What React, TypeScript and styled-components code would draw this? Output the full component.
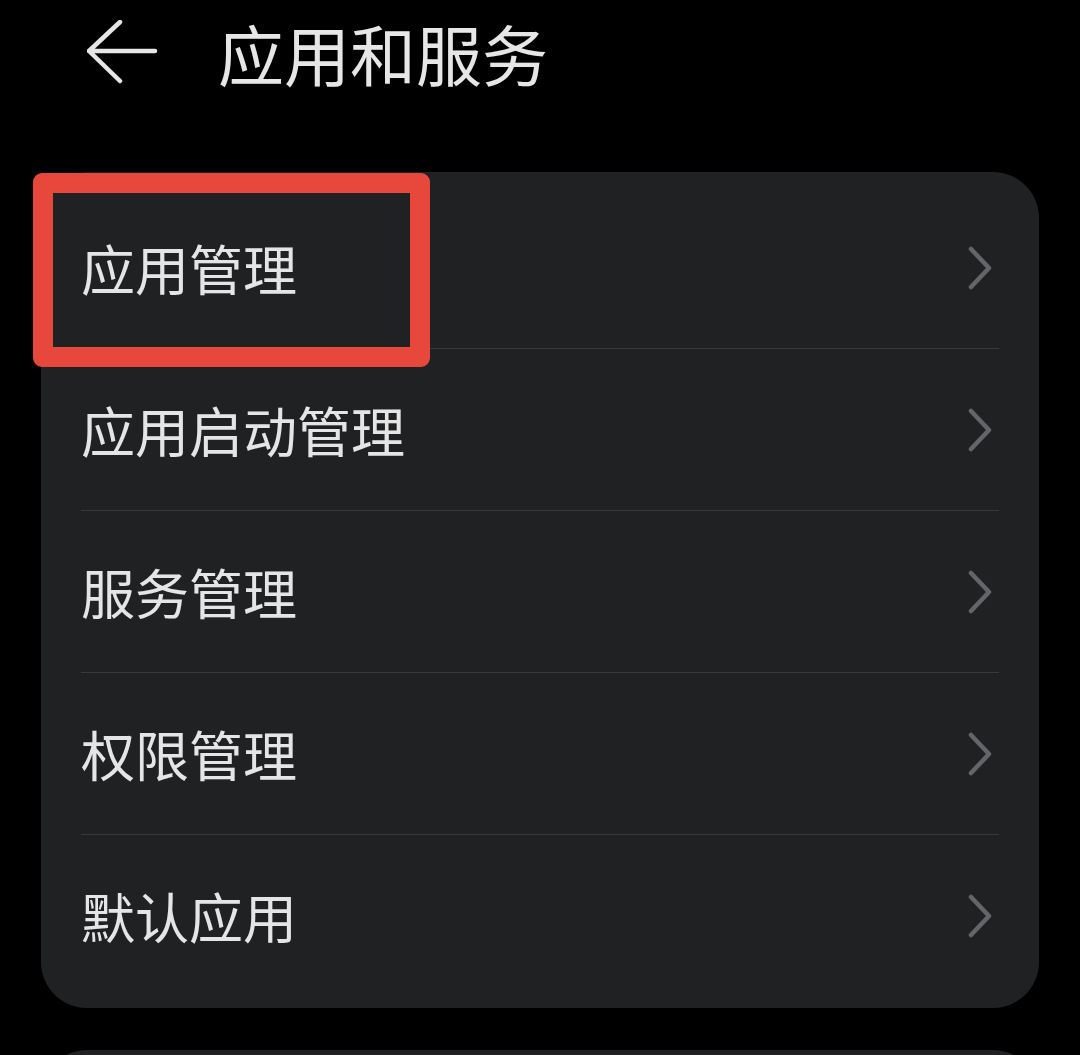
import React from "react";
import styled, { createGlobalStyle } from "styled-components";

const Global = createGlobalStyle`
  html, body { margin: 0; padding: 0; background: #000; }
  body { font-family: "Noto Sans CJK SC", "Noto Sans", sans-serif; overflow: hidden; }
`;

const Page = styled.div`
  width: 1080px;
  height: 1055px;
  background: #000;
  display: flex;
  flex-direction: column;
  overflow: hidden;
`;

const Header = styled.header`
  height: 172px;
  flex: none;
  display: flex;
  align-items: flex-start;
  padding-left: 87px;
  box-sizing: border-box;
`;

const HeaderInner = styled.div`
  height: 104px;
  display: flex;
  align-items: center;
  gap: 59px;
`;

const BackIcon = styled.svg`
  width: 72px;
  height: 64px;
  flex: none;
`;

const Title = styled.h1`
  margin: 0;
  font-size: 66px;
  font-weight: 400;
  line-height: 1;
  color: #e6e6e6;
  letter-spacing: 0;
`;

const Card = styled.section`
  position: relative;
  margin-left: 41px;
  width: 998px;
  background: #202123;
  border-radius: 46px;
  padding: 15px 0 12px;
  box-sizing: border-box;
  flex: none;
`;

const Row = styled.div<{ $last?: boolean }>`
  height: ${(p) => (p.$last ? 161 : 162)}px;
  margin: 0 40px;
  display: flex;
  align-items: center;
  justify-content: space-between;
  box-sizing: border-box;
  border-bottom: ${(p) => (p.$last ? "none" : "1px solid #38393b")};
`;

const Label = styled.span`
  font-size: 54px;
  line-height: 1;
  color: #e5e5e5;
  font-weight: 400;
`;

const Chevron = styled.svg`
  width: 24px;
  height: 44px;
  margin-right: 7px;
  flex: none;
`;

const Highlight = styled.div`
  position: absolute;
  left: -8px;
  top: 1px;
  width: 397px;
  height: 194px;
  border: 20px solid #e8473b;
  border-radius: 9px;
  box-sizing: border-box;
  pointer-events: none;
`;

const NextCard = styled.section`
  margin: 42px 0 0 41px;
  width: 998px;
  height: 200px;
  background: #202123;
  border-radius: 46px;
  flex: none;
`;

const items = ["应用管理", "应用启动管理", "服务管理", "权限管理", "默认应用"];

export default function App() {
  return (
    <>
      <Global />
      <Page>
        <Header>
          <HeaderInner>
            <BackIcon viewBox="0 0 72 64" fill="none">
              <path
                d="M2 31 H68 M33 2 L2 31 L33 61"
                stroke="#e6e6e6"
                strokeWidth="4.5"
                strokeLinecap="round"
                strokeLinejoin="round"
              />
            </BackIcon>
            <Title>应用和服务</Title>
          </HeaderInner>
        </Header>
        <Card>
          {items.map((t, i) => (
            <Row key={t} $last={i === items.length - 1}>
              <Label>{t}</Label>
              <Chevron viewBox="0 0 24 44" fill="none">
                <path
                  d="M3 3 L21 22 L3 41"
                  stroke="#646568"
                  strokeWidth="4.5"
                  strokeLinecap="round"
                  strokeLinejoin="round"
                />
              </Chevron>
            </Row>
          ))}
          <Highlight />
        </Card>
        <NextCard />
      </Page>
    </>
  );
}
